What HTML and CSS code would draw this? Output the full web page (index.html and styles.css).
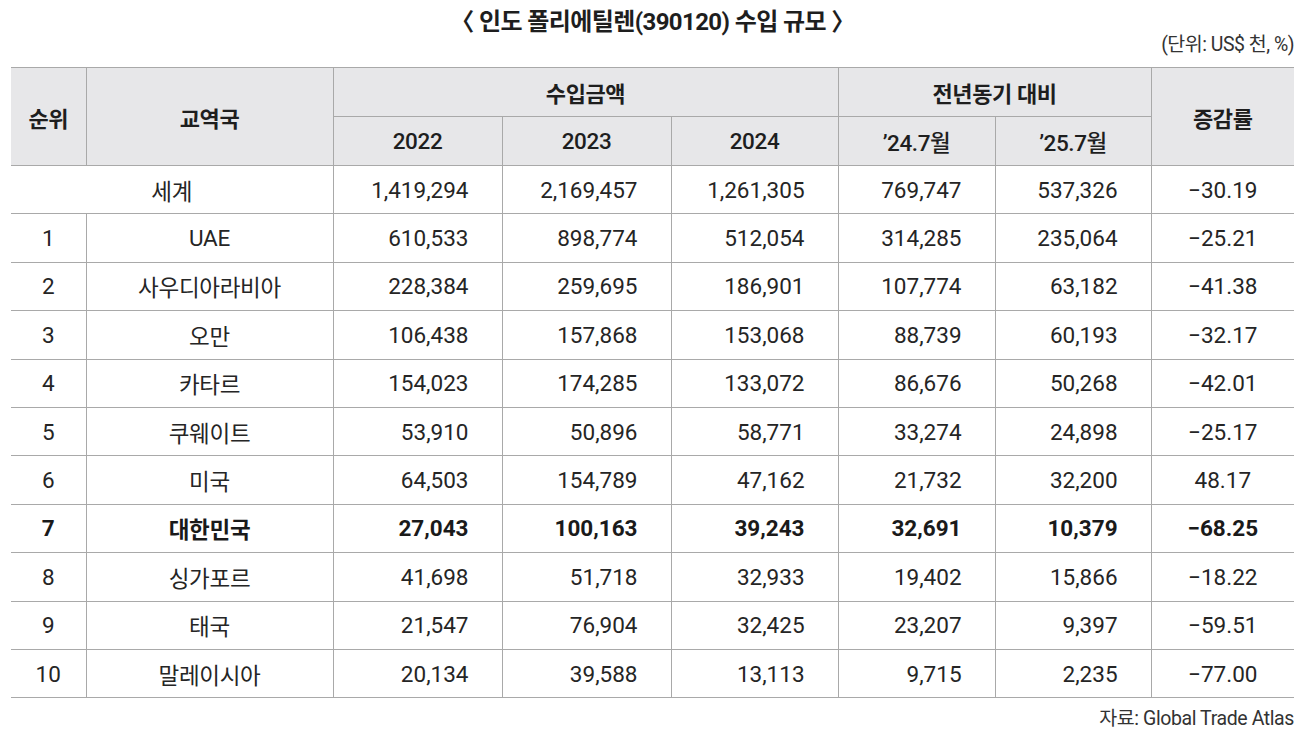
FILE: index.html
```html
<!DOCTYPE html>
<html lang="ko">
<head>
<meta charset="utf-8">
<title>인도 폴리에틸렌(390120) 수입 규모</title>
<link rel="stylesheet" href="styles.css">
</head>
<body>
<div class="page">
  <h1 class="title">〈 인도 폴리에틸렌(390120) 수입 규모 〉</h1>
  <div class="unit">(단위: US$ 천, %)</div>
  <table class="tbl">
    <colgroup>
      <col class="c-rank"><col class="c-name"><col class="c-y"><col class="c-y"><col class="c-y2"><col class="c-m"><col class="c-m2"><col class="c-rate">
    </colgroup>
    <thead>
      <tr>
        <th rowspan="2" class="rank">순위</th>
        <th rowspan="2">교역국</th>
        <th colspan="3">수입금액</th>
        <th colspan="2">전년동기 대비</th>
        <th rowspan="2">증감률</th>
      </tr>
      <tr>
        <th class="yr">2022</th>
        <th class="yr">2023</th>
        <th class="yr">2024</th>
        <th class="yr">’24.7월</th>
        <th class="yr">’25.7월</th>
      </tr>
    </thead>
    <tbody>
      <tr><td colspan="2" class="name">세계</td><td class="num">1,419,294</td><td class="num">2,169,457</td><td class="num">1,261,305</td><td class="num">769,747</td><td class="num">537,326</td><td class="rate">−30.19</td></tr>
      <tr><td class="rank">1</td><td class="name">UAE</td><td class="num">610,533</td><td class="num">898,774</td><td class="num">512,054</td><td class="num">314,285</td><td class="num">235,064</td><td class="rate">−25.21</td></tr>
      <tr><td class="rank">2</td><td class="name">사우디아라비아</td><td class="num">228,384</td><td class="num">259,695</td><td class="num">186,901</td><td class="num">107,774</td><td class="num">63,182</td><td class="rate">−41.38</td></tr>
      <tr><td class="rank">3</td><td class="name">오만</td><td class="num">106,438</td><td class="num">157,868</td><td class="num">153,068</td><td class="num">88,739</td><td class="num">60,193</td><td class="rate">−32.17</td></tr>
      <tr><td class="rank">4</td><td class="name">카타르</td><td class="num">154,023</td><td class="num">174,285</td><td class="num">133,072</td><td class="num">86,676</td><td class="num">50,268</td><td class="rate">−42.01</td></tr>
      <tr><td class="rank">5</td><td class="name">쿠웨이트</td><td class="num">53,910</td><td class="num">50,896</td><td class="num">58,771</td><td class="num">33,274</td><td class="num">24,898</td><td class="rate">−25.17</td></tr>
      <tr><td class="rank">6</td><td class="name">미국</td><td class="num">64,503</td><td class="num">154,789</td><td class="num">47,162</td><td class="num">21,732</td><td class="num">32,200</td><td class="rate">48.17</td></tr>
      <tr class="hl"><td class="rank">7</td><td class="name">대한민국</td><td class="num">27,043</td><td class="num">100,163</td><td class="num">39,243</td><td class="num">32,691</td><td class="num">10,379</td><td class="rate">−68.25</td></tr>
      <tr><td class="rank">8</td><td class="name">싱가포르</td><td class="num">41,698</td><td class="num">51,718</td><td class="num">32,933</td><td class="num">19,402</td><td class="num">15,866</td><td class="rate">−18.22</td></tr>
      <tr><td class="rank">9</td><td class="name">태국</td><td class="num">21,547</td><td class="num">76,904</td><td class="num">32,425</td><td class="num">23,207</td><td class="num">9,397</td><td class="rate">−59.51</td></tr>
      <tr><td class="rank">10</td><td class="name">말레이시아</td><td class="num">20,134</td><td class="num">39,588</td><td class="num">13,113</td><td class="num">9,715</td><td class="num">2,235</td><td class="rate">−77.00</td></tr>
    </tbody>
  </table>
  <div class="source">자료: Global Trade Atlas</div>
</div>
</body>
</html>
```
FILE: styles.css
```css
html, body {
  margin: 0;
  padding: 0;
  background: #ffffff;
}
body {
  font-family: "Roboto", "Noto Sans CJK KR", sans-serif;
  color: #222222;
}
.page {
  width: 1307px;
  padding: 0 13px 0 11px;
  box-sizing: border-box;
  display: flex;
  flex-direction: column;
}
.title {
  margin: 0;
  height: 33px;
  line-height: 44px;
  text-align: center;
  font-size: 24px;
  font-weight: 700;
  letter-spacing: -0.6px;
  color: #1e1e1e;
}
.unit {
  text-align: right;
  font-size: 19.5px;
  letter-spacing: -0.5px;
  line-height: 23px;
  margin-bottom: 11px;
  color: #333333;
}
.tbl {
  width: 1283px;
  border-collapse: collapse;
  table-layout: fixed;
  border-top: 1px solid #a9a9a9;
}
.c-rank { width: 75px; }
.c-name { width: 247px; }
.c-y { width: 169px; }
.c-y2 { width: 167px; }
.c-m { width: 157px; }
.c-m2 { width: 156px; }
.c-rate { width: 143px; }
.tbl th, .tbl td {
  padding: 0;
  border: 1px solid #a9a9a9;
  white-space: nowrap;
}
.tbl tr > :first-child { border-left: none; }
.tbl tr > :last-child { border-right: none; }
.tbl th {
  background: #e7e7e9;
  height: 48px;
  font-size: 22px;
  font-weight: 700;
  letter-spacing: -0.4px;
  color: #1e1e1e;
}
.tbl th.yr { font-weight: 500; font-size: 22.5px; }
.tbl thead tr:nth-child(2) th:first-child { border-left: 1px solid #a9a9a9; }
.tbl td {
  height: 47.4px;
  font-size: 22.5px;
  color: #252525;
}
.tbl td.rank { text-align: center; }
.tbl td.name { text-align: center; letter-spacing: -0.3px; }
.tbl td.num { text-align: right; padding-right: 33px; }
.tbl td.rate { text-align: center; }
.tbl tr.hl td { font-weight: 700; color: #1a1a1a; }
.source {
  margin-top: 4px;
  text-align: right;
  font-size: 19.5px;
  letter-spacing: -0.4px;
  color: #333333;
}
```
